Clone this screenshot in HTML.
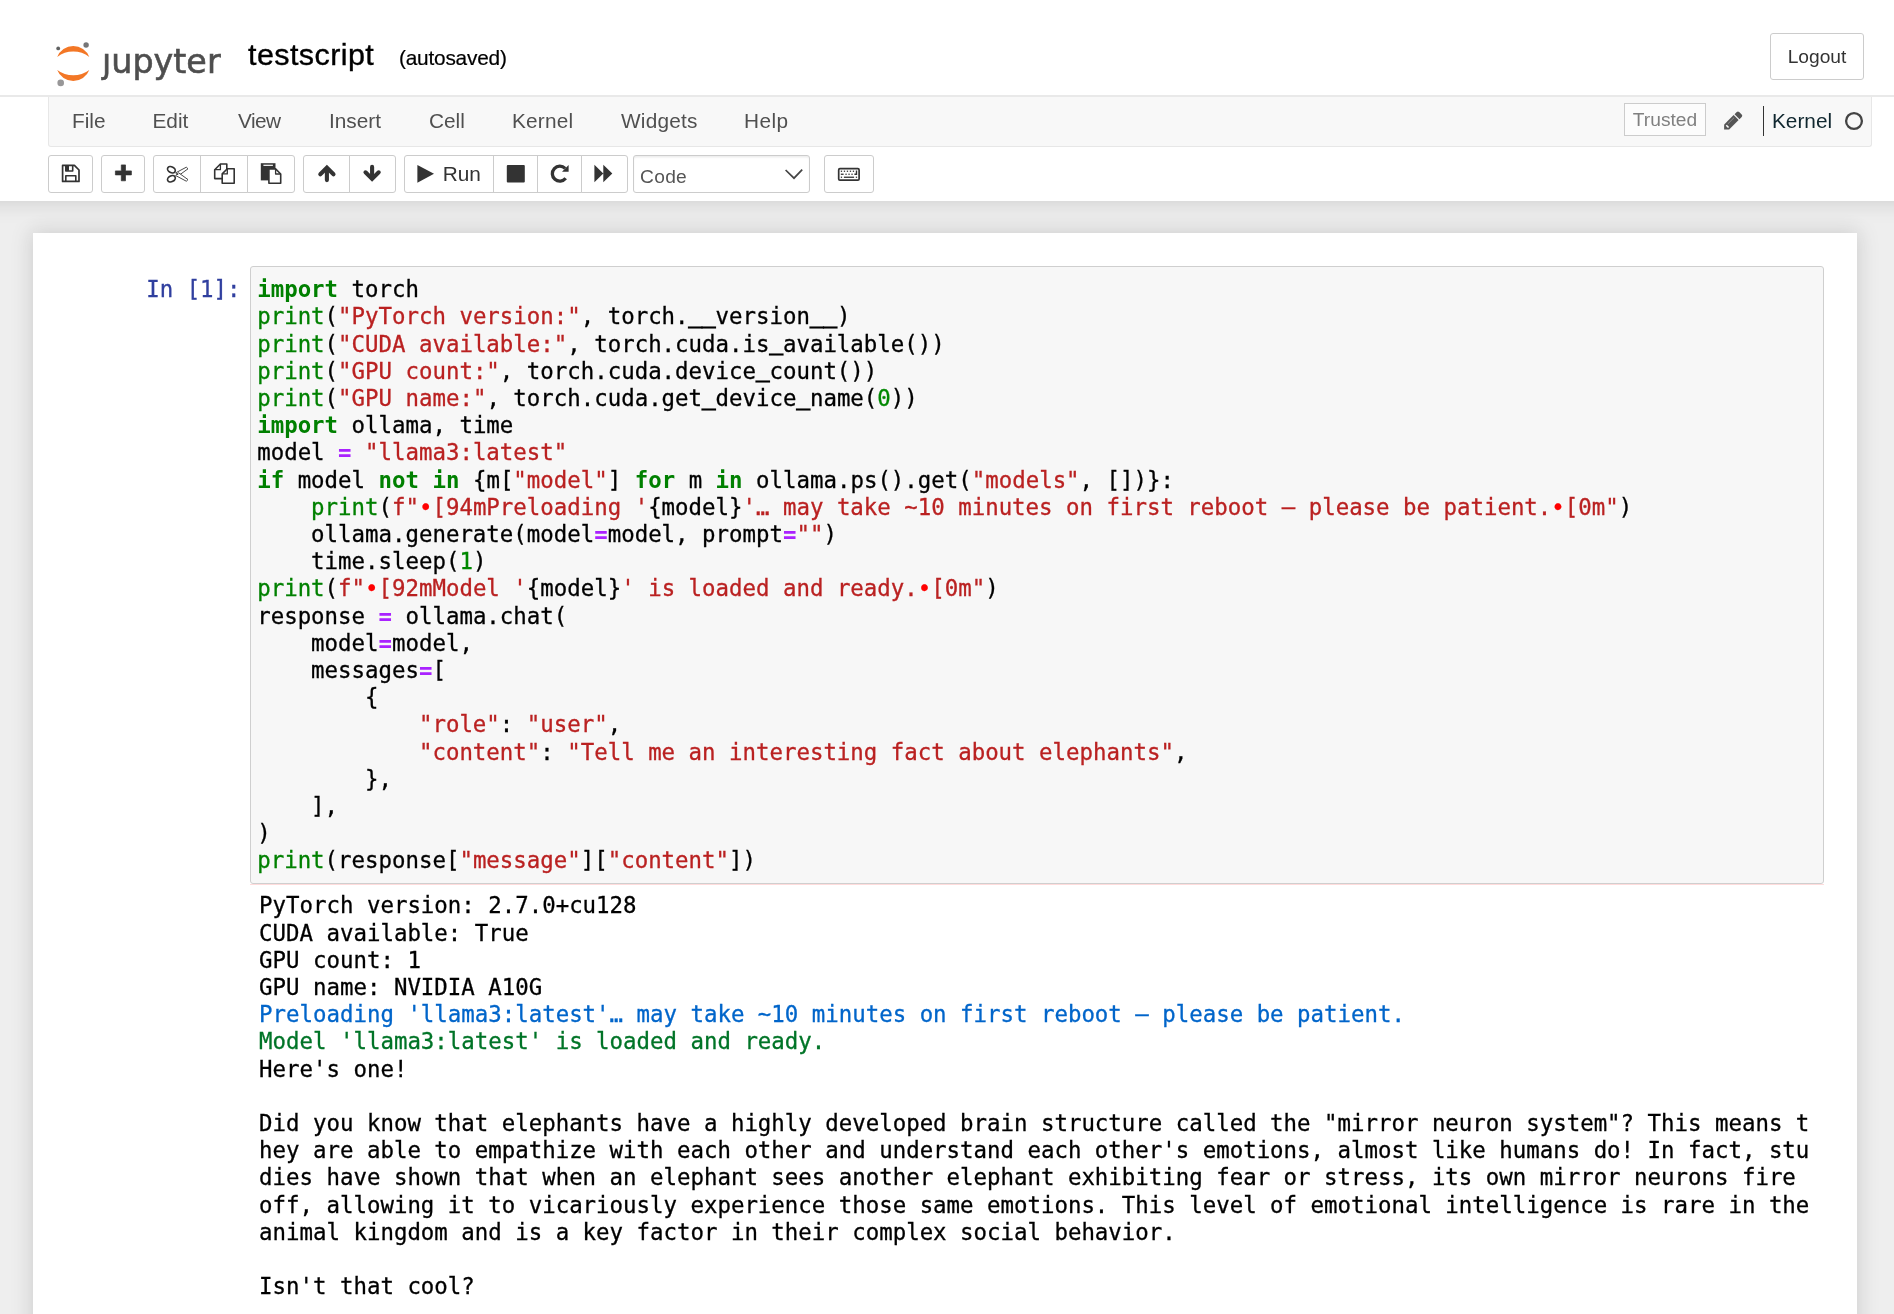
<!DOCTYPE html>
<html lang="en">
<head>
<meta charset="utf-8">
<title>testscript - Jupyter Notebook</title>
<style>
html,body{margin:0;padding:0;}
body{width:1894px;height:1314px;overflow:hidden;background:#eee;position:relative;
  font-family:"Liberation Sans",Arial,sans-serif;color:#000;}
#hshadow{position:absolute;left:-60px;top:-60px;width:2040px;height:261px;background:#fff;
  box-shadow:0 0 19px 1.6px rgba(87,87,87,0.2);z-index:9;}
#header{position:absolute;left:0;top:0;width:1920px;height:201px;background:#fff;z-index:10;}
.abs{position:absolute;}
#root{position:absolute;left:0;top:0;width:1894px;height:1314px;overflow:hidden;will-change:transform;}
#hbar{position:absolute;left:0;top:95px;width:1920px;height:2px;background:#e9e9e9;}
#title{position:absolute;left:248px;top:34.6px;-webkit-text-stroke:0.35px #000;font-size:29px;line-height:40px;letter-spacing:0.4px;transform:scaleX(1.052);transform-origin:0 0;color:#000;white-space:nowrap;}
#autosave{-webkit-text-stroke:0.2px #000;position:absolute;left:399px;top:44px;font-size:20.8px;line-height:28px;letter-spacing:-0.2px;color:#000;white-space:nowrap;}
#logout{position:absolute;left:1770px;top:33px;width:92px;height:45px;border:1px solid #ccc;border-radius:3px;
  font-size:19.2px;line-height:45px;text-align:center;color:#333;background:#fff;}
#menubar{position:absolute;left:48px;top:97px;width:1822px;height:49px;background:#f8f8f8;border:1px solid #e7e7e7;border-top:none;
  border-radius:0 0 3px 3px;}
#menubar .mi{position:absolute;top:9px;font-size:20.8px;line-height:30px;color:#505050;white-space:nowrap;}
#trusted{position:absolute;left:1624px;top:103px;width:80px;height:31px;border:1px solid #ccc;background:#fcfcfc;box-sizing:content-box;
  font-size:19.2px;line-height:31.6px;text-align:center;color:#808080;}
#kname{position:absolute;left:1772px;top:106px;font-size:20.8px;line-height:30px;color:#10272f;white-space:nowrap;}
#kline{position:absolute;left:1763px;top:106px;width:1px;height:30px;background:#333;}
.tb{position:absolute;top:155px;height:36px;border:1px solid #ccc;background:#fff;box-sizing:content-box;}
.tb.l{border-radius:3px 0 0 3px;}
.tb.r{border-radius:0 3px 3px 0;}
.tb.s{border-radius:3px;}
.tb svg{position:absolute;}
#runlbl{position:absolute;left:37.7px;top:-0.4px;font-size:20.8px;line-height:36px;color:#333;}
#celltype{position:absolute;left:633px;top:155px;width:175px;height:36px;border:1px solid #ccc;border-radius:3px;background:#fff;
  box-shadow:inset 0 1.6px 1.6px rgba(0,0,0,0.075);}
#celltype span{position:absolute;left:6px;top:2.6px;letter-spacing:0.3px;font-size:19.2px;line-height:36px;color:#555;}
#nbc{position:absolute;left:33px;top:233px;width:1824px;height:1200px;background:#fff;
  box-shadow:0 0 19px 1.6px rgba(87,87,87,0.2);}
.mono{font-family:"DejaVu Sans Mono","Liberation Mono",monospace;font-size:22.4px;line-height:27.2px;white-space:pre;-webkit-text-stroke:0.3px currentColor;}
#prompt{position:absolute;left:99.2px;top:276.4px;width:141.4px;text-align:right;color:#303F9F;}
#inarea{position:absolute;left:250px;top:266px;width:1572px;height:616px;border:1px solid #cfcfcf;border-radius:3px;background:#f7f7f7;}
#code{position:absolute;left:6.2px;top:9.2px;margin:0;color:#000;}
#out{position:absolute;left:259.1px;top:892.4px;margin:0;color:#000;}
#pinkline{position:absolute;left:250px;top:884px;width:1574px;height:1px;background:#ffdcdc;}
.u{position:relative;top:-2.5px;-webkit-text-stroke:1.2px currentColor;}
.k{color:#008000;font-weight:bold;-webkit-text-stroke:0;}
.b{color:#008000;}
.s{color:#BA2121;}
.o{color:#AA22FF;font-weight:bold;-webkit-text-stroke:0;}
.n{color:#080;}
.x{color:#f00;}
.ab{color:#0065CA;}
.ag{color:#007427;}
</style>
</head>
<body>
<div id="root">
<div id="hshadow"></div>
<div id="header">
  <svg class="abs" id="logo" style="left:50px;top:36px" width="180" height="56" viewBox="50 36 180 56">
    <path d="M57.2 56.9 A17.2 17.2 0 0 1 89.3 56.9 A27 27 0 0 0 57.2 56.9 Z" fill="#F37726"/>
    <path d="M57.2 69.9 A17.2 17.2 0 0 0 89.3 69.9 A27 27 0 0 1 57.2 69.9 Z" fill="#F37726"/>
    <circle cx="58.2" cy="48.4" r="1.9" fill="#616262"/>
    <circle cx="86.1" cy="45" r="2.7" fill="#767677"/>
    <circle cx="60.7" cy="82.9" r="3.3" fill="#989798"/>
    <text x="102" y="73" font-family="DejaVu Sans, Liberation Sans, sans-serif" font-size="34.5" fill="#4E4E4E" stroke="#4E4E4E" stroke-width="0.6" textLength="118.6" lengthAdjust="spacingAndGlyphs">jupyter</text>
    <rect x="101" y="42" width="11" height="10.8" fill="#fff"/>
  </svg>
  <div id="title">testscript</div>
  <div id="autosave">(autosaved)</div>
  <div id="logout">Logout</div>
  <div id="hbar"></div>
  <div id="menubar">
    <span class="mi" style="left:23px;letter-spacing:0px">File</span>
    <span class="mi" style="left:103.5px;letter-spacing:0px">Edit</span>
    <span class="mi" style="left:189px;letter-spacing:-0.6px">View</span>
    <span class="mi" style="left:280px;letter-spacing:0px">Insert</span>
    <span class="mi" style="left:380px;letter-spacing:0px">Cell</span>
    <span class="mi" style="left:463px;letter-spacing:0.2px">Kernel</span>
    <span class="mi" style="left:572px;letter-spacing:0.2px">Widgets</span>
    <span class="mi" style="left:695px;letter-spacing:0.4px">Help</span>
  </div>
  <div id="trusted">Trusted</div>
  <div id="kline"></div>
  <div id="kname">Kernel</div>
  <svg class="abs" style="left:1843px;top:110px" width="22" height="22" viewBox="0 0 22 22"><circle cx="11" cy="11" r="7.9" fill="none" stroke="#444" stroke-width="2.3"/></svg>

  <div class="tb s" style="left:48px;width:43px" id="b-save"></div>
  <div class="tb s" style="left:101px;width:42px" id="b-plus"></div>
  <div class="tb l" style="left:153px;width:47px" id="b-cut"></div>
  <div class="tb" style="left:200px;width:47px;border-left:1px solid #ccc" id="b-copy"></div>
  <div class="tb r" style="left:247px;width:46px" id="b-paste"></div>
  <div class="tb l" style="left:303px;width:46px" id="b-up"></div>
  <div class="tb r" style="left:349px;width:45px" id="b-down"></div>
  <div class="tb l" style="left:404px;width:89px" id="b-run"><span id="runlbl">Run</span></div>
  <div class="tb" style="left:493px;width:44px" id="b-stop"></div>
  <div class="tb" style="left:537px;width:44px" id="b-restart"></div>
  <div class="tb r" style="left:581px;width:45px" id="b-ff"></div>
  <div id="celltype"><span>Code</span></div>
  <div class="tb s" style="left:824px;width:48px" id="b-kbd"></div>

  <svg class="abs" id="icons" style="left:0;top:0;pointer-events:none" width="1894" height="201" viewBox="0 0 1894 201">
    <!-- save -->
    <g fill="none" stroke="#333" stroke-width="1.7" stroke-linejoin="round">
      <path d="M62.6 165.4H74.4L79 170V181.4H62.6Z"/>
      <path d="M65.8 181.4V175.8H75.8V181.4" stroke-width="1.6"/>
      <path d="M65.8 165.4V171H72.7V165.4" stroke-width="1.6"/>
    </g>
    <path d="M65.8 165.4H69V171H65.8Z" fill="#333"/>
    <!-- plus -->
    <path d="M121.3 164.9h4.2v6h5.9v4h-5.9v5.9h-4.2v-5.9h-5.9v-4h5.9z" fill="#333" stroke="#333" stroke-width="0.7" stroke-linejoin="round"/>
    <!-- scissors -->
    <g fill="#fff" stroke="#333" stroke-width="0.9" stroke-linejoin="round">
      <path d="M175.6 172.9L186.3 167.2L188 168.8L178.6 175.6Z"/>
      <path d="M175.6 175.5L186.3 181.2L188 179.6L178.6 172.8Z"/>
    </g>
    <g fill="none" stroke="#333" stroke-width="1.7">
      <ellipse cx="171.4" cy="169.7" rx="4.1" ry="2.9" transform="rotate(28 171.4 169.7)"/>
      <ellipse cx="171.4" cy="178.8" rx="4.1" ry="2.9" transform="rotate(-28 171.4 178.8)"/>
    </g>
    <circle cx="177.6" cy="174.2" r="0.7" fill="#333"/>
    <!-- copy -->
    <g fill="#fff" stroke="#333" stroke-width="1.6" stroke-linejoin="round">
      <path d="M220.4 164H226.8V178.6H214.7V169.7Z"/>
      <path d="M220.4 164V169.7H214.7" fill="none" stroke-width="1.3"/>
      <path d="M227.3 168.8H234.2V183.2H222.2V173.9Z"/>
      <path d="M227.3 168.8V173.9H222.2" fill="none" stroke-width="1.3"/>
    </g>
    <!-- paste -->
    <path d="M260.8 163.2H275.5V180.4H260.8Z" fill="#333"/>
    <path d="M263.4 164.7H272.9V165.9H263.4Z" fill="#fff"/>
    <g fill="#fff" stroke="#333" stroke-width="1.6" stroke-linejoin="round">
      <path d="M268.9 168.9H275.6L280.7 174V183.2H268.9Z"/>
      <path d="M275.6 168.9V174H280.7" fill="none" stroke-width="1.3"/>
    </g>
    <!-- arrows -->
    <g fill="none" stroke="#333" stroke-width="4.1" stroke-linecap="round" stroke-linejoin="miter">
      <path d="M320.3 174.3L326.9 167.7L333.5 174.3"/>
      <path d="M326.9 169V180.1"/>
      <path d="M365.5 172.3L372.1 178.9L378.7 172.3"/>
      <path d="M372.1 166.9V177.5"/>
    </g>
    <!-- play -->
    <path d="M417.4 165L434 173.85L417.4 182.7Z" fill="#333"/>
    <!-- stop -->
    <rect x="506.8" y="165" width="18" height="17.6" rx="1" fill="#333"/>
    <!-- repeat -->
    <path d="M565.15 168.35A7.5 7.5 0 1 0 565.7 178.34" fill="none" stroke="#333" stroke-width="3.3"/>
    <path d="M568.6 165.1V171.7H562Z" fill="#333"/>
    <!-- fast forward -->
    <path d="M594.4 164.7L603.3 173.5L594.4 182.3ZM603.3 164.7L612.3 173.5L603.3 182.3Z" fill="#333"/>
    <!-- select chevron -->
    <path d="M785.6 170L794 178.2L802.2 169.7" fill="none" stroke="#444" stroke-width="1.7"/>
    <!-- keyboard -->
    <rect x="838.7" y="168.7" width="20.4" height="11.4" rx="1.2" fill="none" stroke="#333" stroke-width="1.7"/>
    <g fill="#333">
      <rect x="840.8" y="170.6" width="1.3" height="1.3"/><rect x="843.8" y="170.6" width="1.3" height="1.3"/><rect x="846.8" y="170.6" width="1.3" height="1.3"/><rect x="849.8" y="170.6" width="1.3" height="1.3"/><rect x="852.8" y="170.6" width="1.3" height="1.3"/>
      <path d="M855.8 170.6H857.2V174.9H854.4V173.6H855.8Z"/>
      <rect x="840.8" y="173.6" width="2.8" height="1.3"/><rect x="845.4" y="173.6" width="1.3" height="1.3"/><rect x="848.4" y="173.6" width="1.3" height="1.3"/><rect x="851.4" y="173.6" width="1.3" height="1.3"/>
      <rect x="840.8" y="176.6" width="1.3" height="1.3"/><rect x="843.9" y="176.6" width="10.2" height="1.3"/><rect x="855.8" y="176.6" width="1.3" height="1.3"/>
    </g>
    <!-- pencil -->
    <g transform="translate(1724.1 129.6) rotate(-45)">
      <path d="M0 0L3.6 -3.5H17V3.5H3.6Z" fill="#555"/>
      <path d="M18.3 -3.5H21.4A1.7 1.7 0 0 1 23.1 -1.8V1.8A1.7 1.7 0 0 1 21.4 3.5H18.3Z" fill="#555"/>
      <path d="M4.6 -1.5V1.7" stroke="#fff" stroke-width="1.5" fill="none"/>
      <path d="M6.6 -1.4H15.6" stroke="#999" stroke-width="0.8" fill="none"/>
    </g>
  </svg>
</div>

<div id="nbc"></div>
<div id="prompt" class="mono">In [1]:</div>
<div id="inarea"><pre id="code" class="mono"><span class="k">import</span> torch
<span class="b">print</span>(<span class="s">"PyTorch version:"</span>, torch.<span class="u">_</span><span class="u">_</span>version<span class="u">_</span><span class="u">_</span>)
<span class="b">print</span>(<span class="s">"CUDA available:"</span>, torch.cuda.is<span class="u">_</span>available())
<span class="b">print</span>(<span class="s">"GPU count:"</span>, torch.cuda.device<span class="u">_</span>count())
<span class="b">print</span>(<span class="s">"GPU name:"</span>, torch.cuda.get<span class="u">_</span>device<span class="u">_</span>name(<span class="n">0</span>))
<span class="k">import</span> ollama, time
model <span class="o">=</span> <span class="s">"llama3:latest"</span>
<span class="k">if</span> model <span class="k">not</span> <span class="k">in</span> {m[<span class="s">"model"</span>] <span class="k">for</span> m <span class="k">in</span> ollama.ps().get(<span class="s">"models"</span>, [])}:
    <span class="b">print</span>(<span class="s">f"</span><span class="x">•</span><span class="s">[94mPreloading '</span>{model}<span class="s">'… may take ~10 minutes on first reboot – please be patient.</span><span class="x">•</span><span class="s">[0m"</span>)
    ollama.generate(model<span class="o">=</span>model, prompt<span class="o">=</span><span class="s">""</span>)
    time.sleep(<span class="n">1</span>)
<span class="b">print</span>(<span class="s">f"</span><span class="x">•</span><span class="s">[92mModel '</span>{model}<span class="s">' is loaded and ready.</span><span class="x">•</span><span class="s">[0m"</span>)
response <span class="o">=</span> ollama.chat(
    model<span class="o">=</span>model,
    messages<span class="o">=</span>[
        {
            <span class="s">"role"</span>: <span class="s">"user"</span>,
            <span class="s">"content"</span>: <span class="s">"Tell me an interesting fact about elephants"</span>,
        },
    ],
)
<span class="b">print</span>(response[<span class="s">"message"</span>][<span class="s">"content"</span>])</pre></div>
<div id="pinkline"></div>
<pre id="out" class="mono">PyTorch version: 2.7.0+cu128
CUDA available: True
GPU count: 1
GPU name: NVIDIA A10G
<span class="ab">Preloading 'llama3:latest'… may take ~10 minutes on first reboot – please be patient.</span>
<span class="ag">Model 'llama3:latest' is loaded and ready.</span>
Here's one!

Did you know that elephants have a highly developed brain structure called the "mirror neuron system"? This means t
hey are able to empathize with each other and understand each other's emotions, almost like humans do! In fact, stu
dies have shown that when an elephant sees another elephant exhibiting fear or stress, its own mirror neurons fire 
off, allowing it to vicariously experience those same emotions. This level of emotional intelligence is rare in the
animal kingdom and is a key factor in their complex social behavior.

Isn't that cool?</pre>
</div>
</body>
</html>
